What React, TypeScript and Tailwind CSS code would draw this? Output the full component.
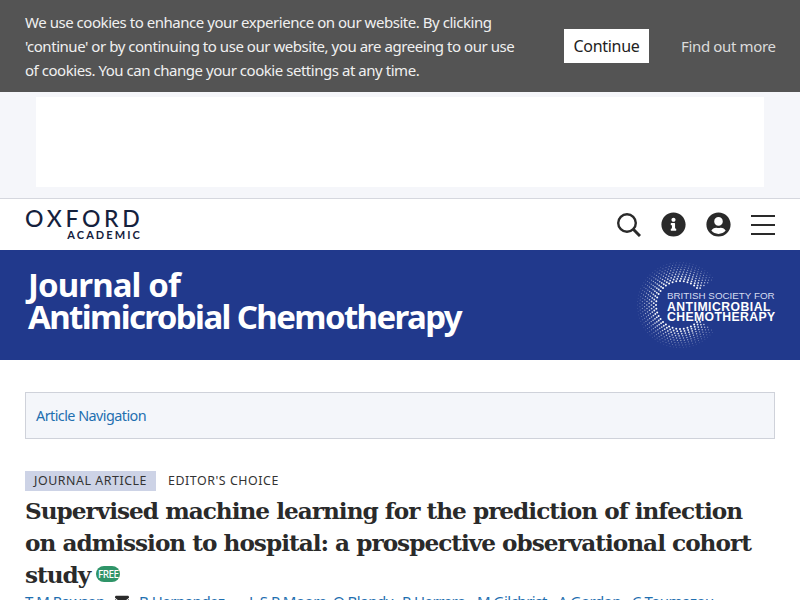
import { FaEnvelope, FaInfoCircle, FaUserCircle } from "react-icons/fa";

const sans = "font-['Noto_Sans','Open_Sans',sans-serif]";

// dots of the BSAC ring logo, fading towards the outer edge
function ringDots() {
  const dots: { x: number; y: number; r: number; o: number }[] = [];
  for (let ring = 0; ring < 9; ring++) {
    const radius = 24 + ring * 2.3;
    const count = 40 + ring * 5;
    for (let i = 0; i < count; i++) {
      const angle = (i / count) * Math.PI * 2;
      // gap on the right where the lettering sits
      if (Math.cos(angle) > 0.3 && Math.abs(Math.sin(angle)) < 0.6) continue;
      dots.push({
        x: 46 + radius * Math.cos(angle),
        y: 44 + radius * Math.sin(angle),
        r: 1 - ring * 0.07,
        o: 1 - ring * 0.09,
      });
    }
  }
  return dots;
}

function BsacLogo() {
  return (
    <div className="relative w-[141px] h-[88px] shrink-0">
      <svg width="92" height="88" viewBox="0 0 92 88" className="absolute left-0 top-0">
        {ringDots().map((d, i) => (
          <circle key={i} cx={d.x} cy={d.y} r={d.r} fill="#fff" opacity={d.o} />
        ))}
      </svg>
      <div className="absolute left-[33px] top-[30px] font-['Liberation_Sans',sans-serif] text-white text-[12.2px] leading-[10.5px] whitespace-nowrap">
        <div className="text-[#d5dcf0] text-[9.8px] tracking-[0px]">BRITISH SOCIETY FOR</div>
        <div className="font-bold tracking-[0.5px]">ANTIMICROBIAL</div>
        <div className="font-bold tracking-[0.42px]">CHEMOTHERAPY</div>
      </div>
    </div>
  );
}

function CookieBar() {
  return (
    <div className={`absolute top-0 left-0 right-0 h-[92px] bg-[#545454] flex items-center pl-[25px] text-[#f0f0f0] ${sans}`}>
      <p className="w-[495px] text-[15px] leading-[24px] tracking-[-0.46px]">
        We use cookies to enhance your experience on our website. By clicking 'continue' or by continuing to use our website, you are agreeing to our use of cookies. You can change your cookie settings at any time.
      </p>
      <button className="ml-[44px] w-[85px] h-[34px] bg-white text-[#222] text-[16px] tracking-[-0.3px]">Continue</button>
      <a className="ml-[32px] text-[15px] tracking-[-0.35px] text-[#dcdcdc]">Find out more</a>
    </div>
  );
}

function Header() {
  return (
    <div className="h-[52px] bg-white border-t border-[#d5d7de] flex items-center pl-[25px] pr-[25px]">
      <div className="flex flex-col items-end w-[115px] pb-[2px] font-['Lato',sans-serif] text-[#14213d]">
        <div className="text-[23px] leading-[21px] font-medium tracking-[3.7px] mr-[-3.5px] whitespace-nowrap">OXFORD</div>
        <div className="text-[11px] leading-[11px] font-bold tracking-[2.1px] mr-[-2px] whitespace-nowrap">ACADEMIC</div>
      </div>
      <div className="flex-1" />
      <div className="flex items-center text-[#2a2a2a]">
        <svg width="24" height="24" viewBox="0 0 24 24" fill="none" stroke="currentColor" strokeWidth="2.4">
          <circle cx="10" cy="10" r="8.8" />
          <path d="M16.5 16.5 L23 23" strokeWidth="3" />
        </svg>
        <FaInfoCircle size={25} className="ml-[20px]" />
        <FaUserCircle size={25} className="ml-[20px]" />
        <div className="ml-[20px] w-[24px] flex flex-col gap-[7px]">
          <div className="h-[2px] bg-[#2a2a2a]" />
          <div className="h-[2px] bg-[#2a2a2a]" />
          <div className="h-[2px] bg-[#2a2a2a]" />
        </div>
      </div>
    </div>
  );
}

function Banner() {
  return (
    <div className="h-[110px] bg-[#21398c] flex items-center justify-between pl-[28px] pr-[25px]">
      <div className="font-['Noto_Sans',sans-serif] font-bold text-white text-[33px] leading-[32px] tracking-[-1.6px] whitespace-nowrap pb-[8px]">
        <div className="tracking-[-0.9px]">Journal of</div>
        <div>Antimicrobial Chemotherapy</div>
      </div>
      <BsacLogo />
    </div>
  );
}

function Article() {
  return (
    <div className={`px-[25px] pt-[32px] ${sans}`}>
      <div className="h-[47px] bg-[#f4f6fa] border border-[#cfd2da] flex items-center pl-[10px]">
        <a className="text-[#1f6fb0] text-[14.4px] tracking-[-0.55px]">Article Navigation</a>
      </div>
      <div className="mt-[32px] flex items-center text-[12.4px] tracking-[0.55px] text-[#333]">
        <span className="h-[20px] w-[131px] bg-[#cdd3e6] flex items-center justify-center whitespace-nowrap">JOURNAL ARTICLE</span>
        <span className="ml-[12px] whitespace-nowrap">EDITOR'S CHOICE</span>
      </div>
      <h1 className="mt-[4px] w-[735px] font-['DejaVu_Serif',serif] font-bold text-[#2a2a2a] text-[23.2px] leading-[32px] tracking-[-1px]">
        Supervised machine learning for the prediction of infection on admission to hospital: a prospective observational cohort study
        <span className="inline-flex items-center justify-center align-[5px] ml-[6px] w-[24px] h-[16px] rounded-full bg-[#2f9468] text-white text-[10px] leading-none font-['Noto_Sans',sans-serif] font-medium tracking-[-0.5px]">FREE</span>
      </h1>
      <div className="text-[#1f6fb0] text-[15px] leading-[20px] tracking-[-0.5px] whitespace-nowrap flex items-center">
        <span className="w-[90px]">T M Rawson</span>
        <FaEnvelope size={14} className="text-[#2a2a2a]" />
        <span className="ml-[10px] w-[110px]">B Hernandez,</span>
        <span className="w-[84px]">L S P Moore,</span>
        <span className="w-[69px]">O Blandy,</span>
        <span className="w-[75px]">P Herrero,</span>
        <span className="w-[81px]">M Gilchrist,</span>
        <span className="w-[74px]">A Gordon,</span>
        <span>C Toumazou</span>
      </div>
    </div>
  );
}

export default function App() {
  return (
    <div className="relative h-screen overflow-hidden bg-white">
      <div className="h-[198px] bg-[#f5f6fa] pt-[97px] px-[36px]">
        <div className="h-[90px] bg-white" />
      </div>
      <Header />
      <Banner />
      <Article />
      <CookieBar />
    </div>
  );
}
